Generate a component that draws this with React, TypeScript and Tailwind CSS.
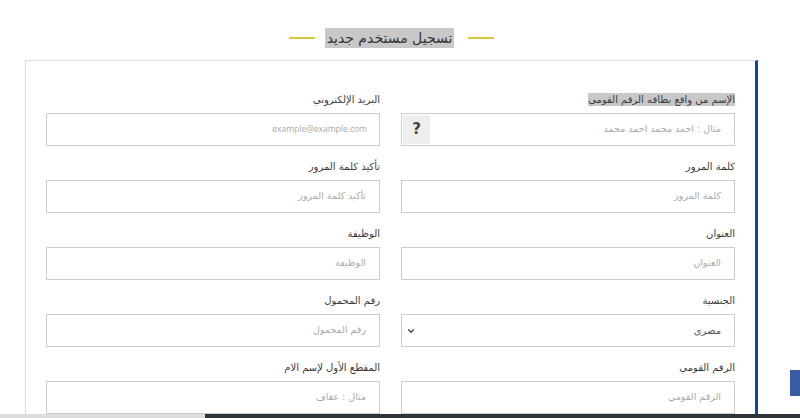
import { ChevronDown } from "lucide-react";

type Campo = {
  label: string;
  placeholder: string;
  ayuda?: boolean;
  resaltado?: boolean;
  select?: boolean;
  latino?: boolean;
};

const filas: [Campo, Campo][] = [
  [
    { label: "الإسم من واقع بطاقه الرقم القومي", placeholder: "مثال : احمد محمد احمد محمد", ayuda: true, resaltado: true },
    { label: "البريد الإلكتروني", placeholder: "example@example.com", latino: true },
  ],
  [
    { label: "كلمة المرور", placeholder: "كلمة المرور" },
    { label: "تأكيد كلمة المرور", placeholder: "تأكيد كلمة المرور" },
  ],
  [
    { label: "العنوان", placeholder: "العنوان" },
    { label: "الوظيفة", placeholder: "الوظيفة" },
  ],
  [
    { label: "الجنسية", placeholder: "مصرى", select: true },
    { label: "رقم المحمول", placeholder: "رقم المحمول" },
  ],
  [
    { label: "الرقم القومي", placeholder: "الرقم القومي" },
    { label: "المقطع الأول لإسم الام", placeholder: "مثال : عفاف" },
  ],
];

function CampoFormulario({ campo }: { campo: Campo }) {
  return (
    <div className="pb-[11px]">
      <label className="mb-[3px] block text-[10px] leading-[20px] text-[#3a3a3a]">
        <span className={campo.resaltado ? "bg-[#c8c8c8] py-[1px]" : ""}>{campo.label}</span>
      </label>
      {campo.select ? (
        <div className="flex h-[33px] items-center justify-between border border-[#ccc] bg-white pl-[4px] pr-[13px] text-[10px] text-[#555]">
          <span>{campo.placeholder}</span>
          <ChevronDown size={10} strokeWidth={3} className="text-[#444]" />
        </div>
      ) : (
        <div className="flex h-[33px] items-stretch border border-[#ccc] bg-white">
          <div
            className={
              campo.latino
                ? "flex flex-1 items-center pr-[12px] font-['Open_Sans',sans-serif] text-[8.5px] text-[#aaa]"
                : "flex flex-1 items-center pr-[13px] text-[9.5px] text-[#aaa]"
            }
          >
            {campo.placeholder}
          </div>
          {campo.ayuda && (
            <div className="my-[1px] ml-[1px] flex w-[27px] items-center justify-center bg-[#eee] text-[15px] font-bold text-[#444]">
              ?
            </div>
          )}
        </div>
      )}
    </div>
  );
}

export default function App() {
  return (
    <div dir="rtl" className="relative h-[418px] overflow-hidden bg-white font-['DejaVu_Sans',sans-serif]">
      <div className="flex h-[60px] items-start justify-center pr-[17px] pt-[28px]">
        <div className="flex h-[20px] items-center">
          <span className="ml-[14px] h-[2px] w-[26px] bg-[#d9c93a]" />
          <h1 className="bg-[#c8c8c8] px-[2px] text-[14px] leading-[20px] text-[#333]">تسجيل مستخدم جديد</h1>
          <span className="mr-[10px] h-[2px] w-[26px] bg-[#d9c93a]" />
        </div>
      </div>

      <div className="mr-[42px] w-[733px] border-t border-l border-r-[3px] border-t-[#ddd] border-l-[#ddd] border-r-[#0d47a1] px-[20px] pt-[29px]">
        <div className="grid grid-cols-2 gap-x-[21px]">
          {filas.map(([a, b]) => (
            <>
              <CampoFormulario key={a.label} campo={a} />
              <CampoFormulario key={b.label} campo={b} />
            </>
          ))}
        </div>
      </div>

      <div className="absolute bottom-[22px] left-[790px] h-[26px] w-[12px] bg-[#3b5ba5]" />
      <div dir="ltr" className="absolute bottom-0 left-0 flex h-[4px] w-full">
        <div className="w-[205px] bg-[#ddd]" />
        <div className="flex-1 bg-[#2f3438]" />
      </div>
    </div>
  );
}
